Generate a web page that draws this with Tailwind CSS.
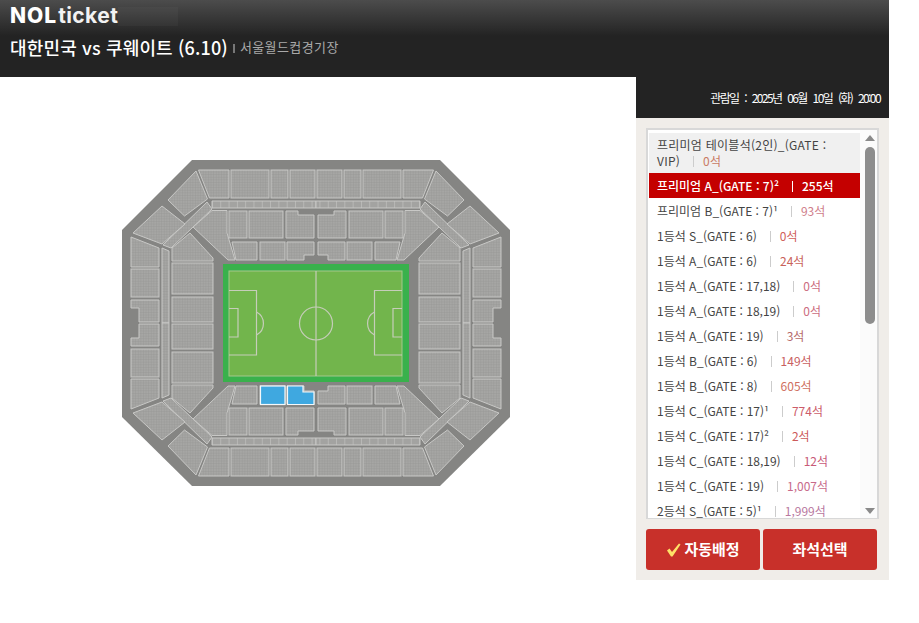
<!DOCTYPE html>
<html lang="ko">
<head>
  <meta charset="UTF-8" />
  <title>NOL ticket | 좌석선택</title>
  <script src="https://cdn.jsdelivr.net/npm/@tailwindcss/browser@4"></script>
</head>
<body class="bg-white font-['Noto_Sans_CJK_KR','Noto_Sans',sans-serif]">
<div class="w-[889px]">

  <!-- header -->
  <header class="h-[77px] bg-[linear-gradient(to_bottom,#4c4c4c_0,#232323_36px,#232323_100%)] pl-[10px] pt-[6px]">
    <div class="flex items-center h-[20px]">
      <span class="font-['Inter'] font-extrabold text-[21px] leading-[20px] text-white tracking-[1px]">NOL</span>
      <span class="font-['Inter'] font-bold text-[21px] leading-[20px] text-[#f2f2f2] ml-[1px] tracking-[0.4px]">ticket</span>
      <span class="w-[60px] h-[19px] bg-white/[0.03]"></span>
    </div>
    <div class="flex items-center mt-[8px] h-[26px]">
      <h1 class="text-[18px] font-medium text-white tracking-[0.15px]">대한민국 vs 쿠웨이트 (6.10)</h1>
      <span class="ml-[5px] mr-[5px] w-[2px] h-[9px] mt-[3px] bg-[#777]"></span>
      <span class="text-[13px] text-[#a9a9a9] tracking-[0.4px]">서울월드컵경기장</span>
    </div>
  </header>

  <div class="flex">
    <!-- seat map -->
    <main class="w-[636px] h-[503px]">
      <svg width="636" height="503" viewBox="0 77 636 503" class="block">
        <defs>
          <pattern id="seats" width="2.6" height="2.6" patternUnits="userSpaceOnUse">
            <rect width="2.6" height="2.6" fill="#a6a6a4"/>
            <path d="M0 0H2.6M0 0V2.6" stroke="#989896" stroke-width="0.8"/>
          </pattern>
          <pattern id="cells" x="212" width="8.3" height="8" patternUnits="userSpaceOnUse">
            <rect width="8.3" height="8" fill="#a3a3a1"/>
            <path d="M0 0V8" stroke="#c6c6c4" stroke-width="1.2"/>
          </pattern>
          <g id="quarter" fill="url(#seats)" stroke="#c8c8c6" stroke-width="1">
            <!-- top rows -->
            <polygon points="198.5,170 229,170 229,198 209.5,198"/>
            <rect x="231" y="170" width="38" height="28"/>
            <rect x="271" y="170" width="17" height="28"/>
            <rect x="290" y="170" width="25" height="28"/>
            <polygon fill="url(#cells)" points="212,201 316,201 316,208 212,208"/>
            <polygon points="212,210.500 227,210.500 227,233 235,260 228,260 193,227"/>
            <rect x="229" y="211" width="18" height="27"/>
            <rect x="249" y="211" width="34" height="27"/>
            <polygon points="286,211 298,211 298,215 314,215 314,238 286,238"/>
            <polygon points="232,242 257,242 257,260 236,260"/>
            <rect x="260" y="242" width="25" height="18"/>
            <polygon points="287,242 314,242 314,255 304,255 304,260 287,260"/>
            <!-- corner -->
            <polygon points="196,171 207.500,199 184.500,216 168,200"/>
            <polygon points="207,202 212,209 171,248 163,245"/>
            <polygon points="162,206 185,224 162,244 133,233"/>
            <polygon points="190,233 213,258 213,261 172,261 172,248"/>
            <!-- side columns -->
            <polygon points="131,237 159,248 159,267 131,267"/>
            <rect x="131" y="269" width="28" height="28"/>
            <polygon points="131,300 159,300 159,322 139,322 139,308 131,308"/>
            <polygon points="162,248 169,251 169,323 162,323"/>
            <rect x="172" y="263" width="41" height="31"/>
            <rect x="172" y="297" width="41" height="25"/>
          </g>
        </defs>

        <!-- stadium shell -->
        <polygon points="192,160 440,160 510,230 510,417 440,486 192,486 122,417 122,230" fill="#858583"/>
        <use href="#quarter"/>
        <use href="#quarter" transform="translate(632,0) scale(-1,1)"/>
        <use href="#quarter" transform="translate(0,646) scale(1,-1)"/>
        <use href="#quarter" transform="translate(632,646) scale(-1,-1)"/>

        <!-- sold blue blocks -->
        <g fill="#3fa8e0" stroke="#f4f8fa" stroke-width="1.200">
          <rect x="260.500" y="386" width="24.500" height="18.500"/>
          <polygon points="287.500,386 303,386 303,392 314,392 314,404.500 287.500,404.500"/>
        </g>

        <!-- pitch -->
        <rect x="223" y="264" width="186" height="118" fill="#39b14c"/>
        <rect x="229" y="271" width="173" height="105" fill="#72b54c" stroke="#a5c78c" stroke-width="1"/>
        <g fill="none" stroke="#c6cdba" stroke-width="1.200">
          <path d="M316 271V376"/>
          <circle cx="316" cy="323.500" r="16.500"/>
          <path d="M229 290.500H256.500V355H229M229 308.500H238V337H229"/>
          <path d="M402 290.500H374.500V355H402M402 308.500H393V337H402"/>
          <path d="M256.500 312A13 13 0 0 1 256.500 335M374.500 312A13 13 0 0 0 374.500 335"/>
        </g>
      </svg>
    </main>

    <!-- grade panel -->
    <aside class="w-[253px]">
      <div class="h-[41px] bg-[#232323] flex items-center justify-end pr-[9px] text-[12px] text-white tracking-[-1.6px] [word-spacing:4px]">관람일 : 2025년 06월 10일 (화) 20:00</div>
      <div class="h-[462px] bg-[#f0ede9] px-[10px] pt-[10px]">
        <div class="w-[233px] h-[391px] bg-white border-2 border-[#d8d8d8] border-b-[1px] pl-px pt-[3px] flex overflow-hidden">
          <ul class="w-[212px] text-[12px] text-[#444]">
            <li class="bg-[#f0f0f0] pl-[8px] pr-[20px] py-1 leading-[16px] tracking-[0.25px]">프리미엄 테이블석(2인)_(GATE : VIP)<i class="inline-block w-px h-[11px] bg-[#ccc] ml-[13px] mr-[9px] align-[-1px]"></i><span class="text-[#c97a64]">0석</span></li>
            <li class="bg-[#c40000] text-white font-medium px-[8px] py-1 leading-[17px]">프리미엄 A_(GATE : 7)²<i class="inline-block w-px h-[11px] bg-white ml-[13px] mr-[9px] align-[-1px]"></i><span>255석</span></li>
            <li class="px-[8px] py-1 leading-[17px]">프리미엄 B_(GATE : 7)¹<i class="inline-block w-px h-[11px] bg-[#ccc] ml-[13px] mr-[9px] align-[-1px]"></i><span class="text-[#cf7d8a]">93석</span></li>
            <li class="px-[8px] py-1 leading-[17px]">1등석 S_(GATE : 6)<i class="inline-block w-px h-[11px] bg-[#ccc] ml-[13px] mr-[9px] align-[-1px]"></i><span class="text-[#d0605a]">0석</span></li>
            <li class="px-[8px] py-1 leading-[17px]">1등석 A_(GATE : 6)<i class="inline-block w-px h-[11px] bg-[#ccc] ml-[13px] mr-[9px] align-[-1px]"></i><span class="text-[#c9625a]">24석</span></li>
            <li class="px-[8px] py-1 leading-[17px]">1등석 A_(GATE : 17,18)<i class="inline-block w-px h-[11px] bg-[#ccc] ml-[13px] mr-[9px] align-[-1px]"></i><span class="text-[#cc6c7e]">0석</span></li>
            <li class="px-[8px] py-1 leading-[17px]">1등석 A_(GATE : 18,19)<i class="inline-block w-px h-[11px] bg-[#ccc] ml-[13px] mr-[9px] align-[-1px]"></i><span class="text-[#cc6c7e]">0석</span></li>
            <li class="px-[8px] py-1 leading-[17px]">1등석 A_(GATE : 19)<i class="inline-block w-px h-[11px] bg-[#ccc] ml-[13px] mr-[9px] align-[-1px]"></i><span class="text-[#b56a6a]">3석</span></li>
            <li class="px-[8px] py-1 leading-[17px]">1등석 B_(GATE : 6)<i class="inline-block w-px h-[11px] bg-[#ccc] ml-[13px] mr-[9px] align-[-1px]"></i><span class="text-[#c9605f]">149석</span></li>
            <li class="px-[8px] py-1 leading-[17px]">1등석 B_(GATE : 8)<i class="inline-block w-px h-[11px] bg-[#ccc] ml-[13px] mr-[9px] align-[-1px]"></i><span class="text-[#cf7060]">605석</span></li>
            <li class="px-[8px] py-1 leading-[17px]">1등석 C_(GATE : 17)¹<i class="inline-block w-px h-[11px] bg-[#ccc] ml-[13px] mr-[9px] align-[-1px]"></i><span class="text-[#cc5c6a]">774석</span></li>
            <li class="px-[8px] py-1 leading-[17px]">1등석 C_(GATE : 17)²<i class="inline-block w-px h-[11px] bg-[#ccc] ml-[13px] mr-[9px] align-[-1px]"></i><span class="text-[#cc5a5a]">2석</span></li>
            <li class="px-[8px] py-1 leading-[17px]">1등석 C_(GATE : 18,19)<i class="inline-block w-px h-[11px] bg-[#ccc] ml-[13px] mr-[9px] align-[-1px]"></i><span class="text-[#c85a78]">12석</span></li>
            <li class="px-[8px] py-1 leading-[17px]">1등석 C_(GATE : 19)<i class="inline-block w-px h-[11px] bg-[#ccc] ml-[13px] mr-[9px] align-[-1px]"></i><span class="text-[#c86a8a]">1,007석</span></li>
            <li class="px-[8px] py-1 leading-[17px]">2등석 S_(GATE : 5)¹<i class="inline-block w-px h-[11px] bg-[#ccc] ml-[13px] mr-[9px] align-[-1px]"></i><span class="text-[#b878a0]">1,999석</span></li>
          </ul>
          <!-- scrollbar -->
          <div class="w-[17px] pl-[3px] -mt-[3px] bg-[#fbfbfb] flex flex-col items-center">
            <svg width="10" height="6" viewBox="0 0 10 6" class="mt-[5px]"><path d="M5 0L10 6H0Z" fill="#8a8a8a"/></svg>
            <div class="w-[10px] h-[177px] mt-[6px] rounded-[5px] bg-[#8d8d8d]"></div>
            <svg width="10" height="6" viewBox="0 0 10 6" class="mt-auto mb-[4px]"><path d="M5 6L10 0H0Z" fill="#8a8a8a"/></svg>
          </div>
        </div>
        <div class="flex gap-[3px] mt-[10px]">
          <button class="w-[114px] h-[41px] rounded-[3px] bg-[#c8302a] text-white text-[15px] font-bold flex items-center justify-center gap-[3px]">
            <svg width="15" height="14" viewBox="0 0 15 14"><path d="M1 7.500L3.500 5.500L6 9L13 0.500L14.500 1.500L6.500 13.500H5Z" fill="#ffe168"/></svg>
            자동배정
          </button>
          <button class="w-[114px] h-[41px] rounded-[3px] bg-[#c8302a] text-white text-[15px] font-bold">좌석선택</button>
        </div>
      </div>
    </aside>
  </div>
</div>
</body>
</html>
